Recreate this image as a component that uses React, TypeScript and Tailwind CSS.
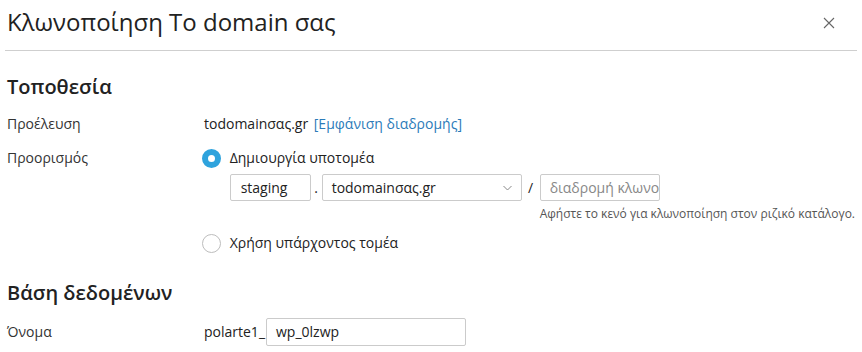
import React from "react";

export default function App() {
  return (
    <div className="w-[862px] h-[352px] overflow-hidden bg-white text-[#222] font-['Open_Sans',sans-serif]">
      <div className="flex items-start justify-between pl-[2px] pr-[22px] pt-[4px] h-[51px] border-b border-[#cfcfcf] mx-[5px]">
        <h1 className="text-[24px] leading-[36px] font-normal text-[#222]">Κλωνοποίηση To domain σας</h1>
        <svg width="12" height="12" viewBox="0 0 12 12" className="mt-[13px]">
          <path d="M1 1 L11 11 M11 1 L1 11" stroke="#666" strokeWidth="1.1" fill="none" />
        </svg>
      </div>

      <div className="px-[7px]">
        <h2 className="text-[20px] font-semibold leading-[28px] mt-[22px] text-[#222]">Τοποθεσία</h2>

        <div className="flex items-center mt-[13px] text-[14px] leading-[20px]">
          <div className="w-[197px] text-[#333]">Προέλευση</div>
          <div className="text-[#222]">
            todomainσας.gr <span className="text-[#2b7bb9] ml-[2px]">[Εμφάνιση διαδρομής]</span>
          </div>
        </div>

        <div className="flex mt-[14px] text-[14px] leading-[20px]">
          <div className="w-[197px] text-[#333]">Προορισμός</div>
          <div className="flex flex-col">
            <label className="flex items-center gap-[9px]">
              <span className="w-[19px] h-[19px] rounded-full border-[6px] border-[#2ea3dd] bg-white"></span>
              <span>Δημιουργία υποτομέα</span>
            </label>
            <div className="flex items-center ml-[28px] mt-[6px]">
              <div className="w-[81px] h-[27px] border border-[#cbcbcb] rounded-[2px] px-[10px] flex items-center">staging</div>
              <span className="w-[11px] text-center">.</span>
              <div className="w-[200px] h-[27px] border border-[#cbcbcb] rounded-[2px] pl-[9px] pr-[9px] flex items-center justify-between">
                <span>todomainσας.gr</span>
                <svg width="9" height="6" viewBox="0 0 9 6">
                  <path d="M0.5 1 L4.5 5 L8.5 1" stroke="#888" strokeWidth="1" fill="none" />
                </svg>
              </div>
              <span className="w-[18px] text-center">/</span>
              <input
                readOnly
                placeholder="διαδρομή κλωνοποίησης"
                className="w-[120px] h-[27px] border border-[#cbcbcb] rounded-[2px] pl-[9px] text-[14px] outline-none placeholder:text-[#888] font-['Open_Sans',sans-serif]"
              />
            </div>
            <div className="ml-[338px] mt-[4px] text-[12px] leading-[17px] text-[#555] whitespace-nowrap">Αφήστε το κενό για κλωνοποίηση στον ριζικό κατάλογο.</div>
            <label className="flex items-center gap-[9px] mt-[11px]">
              <span className="w-[19px] h-[19px] rounded-full border border-[#bdbdbd] bg-white"></span>
              <span>Χρήση υπάρχοντος τομέα</span>
            </label>
          </div>
        </div>

        <h2 className="text-[20px] font-semibold leading-[28px] mt-[26px] text-[#222]">Βάση δεδομένων</h2>

        <div className="flex items-center mt-[11px] text-[14px] leading-[20px]">
          <div className="w-[197px] text-[#333]">Όνομα</div>
          <span>polarte1_</span>
          <div className="w-[200px] h-[28px] border border-[#cbcbcb] rounded-[2px] px-[9px] flex items-center ml-[1px]">wp_0lzwp</div>
        </div>
      </div>
    </div>
  );
}
